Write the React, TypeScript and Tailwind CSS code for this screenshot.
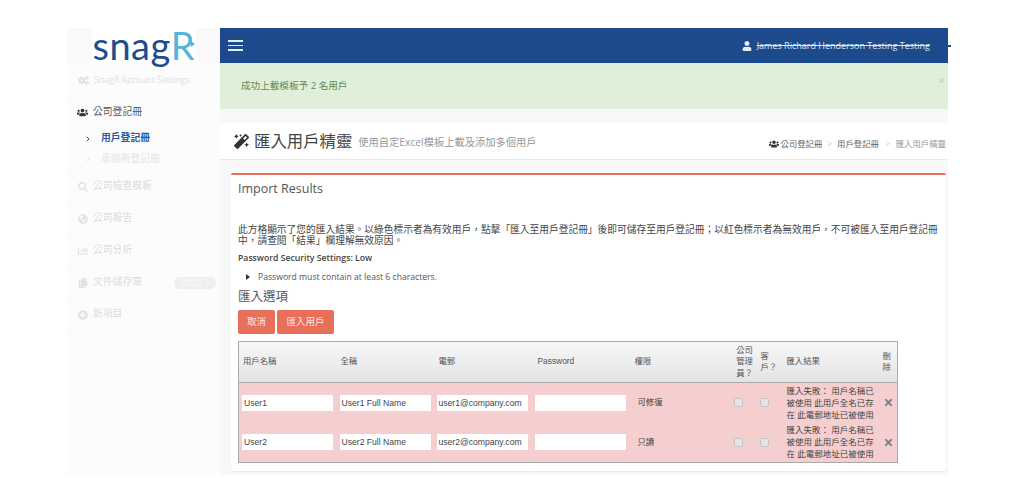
import { FaChartBar, FaCogs, FaCopy, FaGlobeAmericas, FaMagic, FaPlusCircle, FaSearch, FaTimes, FaUser, FaUsers } from "react-icons/fa";
import { ChevronRight } from "lucide-react";
import type { ReactNode } from "react";

const font = "font-['Open_Sans','Noto_Sans_CJK_TC',sans-serif]";
const tableFont = "font-['Liberation_Sans','Noto_Sans_CJK_TC',sans-serif]";

function NavItem({ icon, label, badge }: { icon: ReactNode; label: string; badge?: string }) {
  return (
    <div className="flex h-8 items-center border-b border-[#fafafa] pl-[11px] text-[9.8px] text-[#dcdcdc]">
      <span className="flex w-[15px] justify-start text-[10px] text-[#e2e2e2]">{icon}</span>
      <span>{label}</span>
      {badge && (
        <span className="ml-auto mr-[4px] rounded-full bg-[#efefef] px-[6px] text-[7.5px] leading-[12px] text-[#fafafa]">{badge}</span>
      )}
    </div>
  );
}

function Sidebar() {
  return (
    <aside className="w-[153px] shrink-0 bg-[#fcfcfc]">
      <div className="flex h-[35px] justify-center bg-[#f9f9f9]">
        <div className="relative flex h-[35px] w-[104px] items-center justify-center bg-white font-['Lato',sans-serif] text-[38px] leading-[35px]">
          <span className="tracking-[0.5px] text-[#1d4d8c]">snag</span>
          <span className="text-[#55b4dc]">R</span>
          <svg className="absolute right-[1px] top-[13px]" width="4" height="6" viewBox="0 0 4 6">
            <path d="M0 0 L4 3 L0 6 Z" fill="#55b4dc" />
          </svg>
        </div>
      </div>
      <div className="flex h-[35px] items-center border-b border-[#f7f7f7] pl-[11px] pt-[1px] text-[8.8px] text-[#dfdfdf]">
        <FaCogs className="mr-[5px] text-[11px]" />
        <span>SnagR Account Settings</span>
      </div>
      <div className="flex h-[29px] items-center pl-[10px] text-[9.8px] text-[#555]">
        <FaUsers className="mr-[5px] text-[11px] text-[#333]" />
        <span>公司登記冊</span>
      </div>
      <div className="flex h-[22px] items-center pl-[17px] pt-[1px] text-[9.8px] font-semibold text-[#2a5a9c]">
        <ChevronRight size={8} strokeWidth={3} className="mr-[9px]" />
        <span>用戶登記冊</span>
      </div>
      <div className="flex h-[22px] items-center border-b border-[#f7f7f7] pb-[1px] pl-[17px] text-[9.8px] text-[#e4e4e4]">
        <ChevronRight size={8} strokeWidth={3} className="mr-[9px]" />
        <span>承辦商登記冊</span>
      </div>
      <NavItem icon={<FaSearch />} label="公司檢查模板" />
      <NavItem icon={<FaGlobeAmericas />} label="公司報告" />
      <NavItem icon={<FaChartBar />} label="公司分析" />
      <NavItem icon={<FaCopy />} label="文件儲存庫" badge="測試版！" />
      <NavItem icon={<FaPlusCircle />} label="新項目" />
    </aside>
  );
}

function Crumbs() {
  return (
    <div className="mr-[2px] ml-auto mt-[7px] flex items-center text-[8.4px] text-[#666]">
      <FaUsers className="mr-[1px] text-[10px] text-[#333]" />
      <span>公司登記冊</span>
      <span className="mx-[5px] text-[#ccc]">&gt;</span>
      <span>用戶登記冊</span>
      <span className="mx-[6px] text-[#ccc]">&gt;</span>
      <span className="text-[#999]">匯入用戶精靈</span>
    </div>
  );
}

function ResultRow({ name, email, role }: { name: string; email: string; role: string }) {
  const input = "block h-[16px] w-[91px] bg-white pl-[2px] text-[8.6px] leading-[16px] text-[#444]";
  return (
    <tr className="h-[40px] bg-[#f5cfcf]">
      <td className="pl-[3px]"><div className={input}>{name}</div></td>
      <td className="pl-[3px]"><div className={input}>{name} Full Name</div></td>
      <td className="pl-[2px]"><div className={input}>{email}</div></td>
      <td className="pl-[1px]"><div className={input}></div></td>
      <td className="pl-[7px] text-[8.4px] text-[#444]">{role}</td>
      <td className="pl-[2px]"><div className="h-[9px] w-[9px] rounded-[2px] border border-[#c4c4c4] bg-[#e4e4e4]"></div></td>
      <td className="pl-[2px]"><div className="h-[9px] w-[9px] rounded-[2px] border border-[#c4c4c4] bg-[#e4e4e4]"></div></td>
      <td className="pl-[4px] text-[8.5px] leading-[12px] text-[#444]">匯入失敗： 用戶名稱已被使用 此用戶全名已存在 此電郵地址已被使用</td>
      <td className="pl-[5px] text-[#7c8490]"><FaTimes className="text-[11px]" /></td>
    </tr>
  );
}

function ResultsTable() {
  const th = "px-[4px] text-left align-middle font-normal";
  return (
    <table className={`${tableFont} w-[659px] table-fixed border-collapse border border-[#aaa] text-[8.4px]`}>
      <colgroup>
        <col className="w-[98px]" />
        <col className="w-[98px]" />
        <col className="w-[99px]" />
        <col className="w-[97px]" />
        <col className="w-[101px]" />
        <col className="w-[26px]" />
        <col className="w-[25px]" />
        <col className="w-[95px]" />
        <col className="w-[20px]" />
      </colgroup>
      <thead>
        <tr className="h-[41px] border-b border-[#aaa] bg-gradient-to-b from-[#f7f7f7] to-[#e4e4e4] leading-[11.5px] text-[#555]">
          <th className={th}>用戶名稱</th>
          <th className={th}>全稱</th>
          <th className={th}>電郵</th>
          <th className={th}>Password</th>
          <th className={th}>權限</th>
          <th className="px-[3px] text-center align-middle font-normal">公司管理員？</th>
          <th className="px-[3px] text-left align-middle font-normal">客戶？</th>
          <th className={th}>匯入結果</th>
          <th className="px-[5px] text-left align-middle font-normal">刪除</th>
        </tr>
      </thead>
      <tbody>
        <ResultRow name="User1" email="user1@company.com" role="可修復" />
        <ResultRow name="User2" email="user2@company.com" role="只讀" />
      </tbody>
    </table>
  );
}

export default function App() {
  return (
    <div className={`${font} h-[485px] w-[1024px] overflow-hidden bg-white pl-[67px] pt-[28px]`}>
      <div className="flex h-[447px] w-[881px]">
        <Sidebar />
        <main className="min-w-0 flex-1 bg-[#f8f8f8]">
          <header className="relative flex h-[35px] items-center bg-[#1d4a8c] pl-[8px] text-white">
            <div className="flex w-[15px] flex-col gap-[3px]">
              <span className="h-[1.5px] bg-[#e8edf4]"></span>
              <span className="h-[1.5px] bg-[#e8edf4]"></span>
              <span className="h-[1.5px] bg-[#e8edf4]"></span>
            </div>
            <FaUser className="ml-auto text-[10px] text-[#e8edf4]" />
            <span className="ml-[5px] mr-[18px] text-[9px] text-[#dfe6f0] line-through">James Richard Henderson Testing Testing</span>
            <span className="absolute -right-[3px] top-[17px] h-[2px] w-[3px] bg-[#1d4a8c]"></span>
          </header>
          <div className="flex h-[46px] items-center justify-between bg-[#e0efd9] pl-[21px] pr-[3px] pt-[1px] text-[9.6px] text-[#5f8a55]">
            <span>成功上載模板予 2 名用戶</span>
            <FaTimes className="mb-[12px] text-[7px] text-[#c8d4c4]" />
          </div>
          <div className="mt-[14px] flex h-[37px] items-center border-b border-[#e8e8e8] bg-white pl-[14px]">
            <FaMagic className="mr-[5px] text-[15px] text-[#333]" />
            <span className="mt-[1px] text-[16.4px] text-[#444]">匯入用戶精靈</span>
            <span className="ml-[6px] mt-[4px] text-[10.25px] text-[#999]">使用自定Excel模板上載及添加多個用戶</span>
            <Crumbs />
          </div>
          <section className="ml-[11px] mr-[2px] mt-[13px] h-[298px] rounded-[2px] border-t-2 border-[#e8705a] bg-white pl-[7px] pt-[4px] shadow-[0_1px_2px_rgba(0,0,0,0.06)]">
            <h2 className="text-[12.5px] leading-[20px] text-[#555]">Import Results</h2>
            <p className="mt-[25px] w-[704px] text-[9.72px] leading-[11px] text-[#444]">
              此方格顯示了您的匯入結果。以綠色標示者為有效用戶，點擊「匯入至用戶登記冊」後即可儲存至用戶登記冊；以紅色標示者為無效用戶，不可被匯入至用戶登記冊中，請查閱「結果」欄理解無效原因。
            </p>
            <p className="mt-[5px] text-[8.7px] font-semibold leading-[14px] text-[#444]">Password Security Settings: Low</p>
            <div className="mt-[5px] flex items-center pl-[8px] text-[8.65px] leading-[14px] text-[#555]">
              <span className="mr-[8px] h-0 w-0 border-y-[3px] border-l-[4px] border-y-transparent border-l-[#333]"></span>
              <span>Password must contain at least 6 characters.</span>
            </div>
            <h3 className="mt-[3px] text-[12.5px] leading-[20px] text-[#555]">匯入選項</h3>
            <div className="mt-[3px] flex gap-[2px]">
              <button className="h-[24px] w-[37px] rounded-[2px] bg-[#e8705a] text-[9.5px] text-[#fbe6e2]">取消</button>
              <button className="h-[24px] w-[57px] rounded-[2px] bg-[#e8705a] text-[9.5px] text-[#fbe6e2]">匯入用戶</button>
            </div>
            <div className="mt-[7px]">
              <ResultsTable />
            </div>
          </section>
        </main>
      </div>
    </div>
  );
}
